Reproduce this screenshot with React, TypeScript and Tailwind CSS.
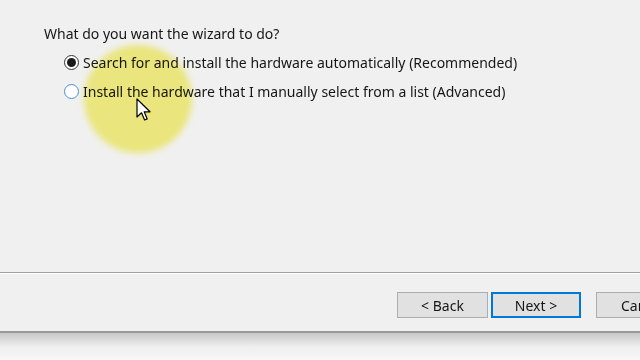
import React from 'react';

const font = { fontFamily: '"Noto Sans", "Open Sans", sans-serif' };

const Radio: React.FC<{ checked?: boolean }> = ({ checked }) => (
    <span
        className={
            checked
                ? 'flex h-[15px] w-[15px] shrink-0 items-center justify-center rounded-full border border-[#333] bg-white'
                : 'flex h-[15px] w-[15px] shrink-0 items-center justify-center rounded-full border border-[#4a90d0] bg-white'
        }
    >
        {checked && <span className="h-[9px] w-[9px] rounded-full bg-[#1a1a1a]" />}
    </span>
);

export default function App() {
    return (
        <div className="relative flex h-[360px] w-[640px] flex-col overflow-hidden bg-[#f0f0f0] text-[#161616]" style={font}>
            {/* question + options */}
            <div className="flex h-[272px] flex-col pl-[44px] pt-[24px]">
                <div className="text-[14px] leading-[20px]">What do you want the wizard to do?</div>
                <div className="mt-[8px] flex flex-col gap-[9px] pl-[20px]">
                    <label className="flex h-[20px] items-center gap-[4px] text-[14px]">
                        <Radio checked />
                        <span>Search for and install the hardware automatically (Recommended)</span>
                    </label>
                    <label className="flex h-[20px] items-center gap-[4px] text-[14px]">
                        <Radio />
                        <span>Install the hardware that I manually select from a list (Advanced)</span>
                    </label>
                </div>
            </div>

            {/* divider */}
            <div className="h-px bg-[#a0a0a0]" />
            <div className="h-px bg-white" />

            {/* button bar */}
            <div className="flex h-[57px] items-start pl-[397px] pt-[18px] text-[14px]">
                <button className="h-[26px] w-[91px] shrink-0 border border-[#adadad] bg-[#e1e1e1]">&lt; Back</button>
                <button className="ml-[3px] h-[26px] w-[90px] shrink-0 border-2 border-[#0078d7] bg-[#e1e1e1]">Next &gt;</button>
                <button className="ml-[15px] h-[26px] w-[90px] shrink-0 border border-[#adadad] bg-[#e1e1e1] text-left pl-[24px]">Cancel</button>
            </div>

            {/* bottom edge */}
            <div className="h-[2px] bg-[#9a9a9a]" />
            <div className="flex-1 bg-gradient-to-b from-[#c8c8c8] via-[#eeeeee] to-[#f8f8f8]" />

            {/* cursor highlight */}
            <div className="pointer-events-none absolute left-[84px] top-[45px] h-[108px] w-[108px] rounded-full bg-[#f6f050] opacity-70 mix-blend-multiply blur-[3px]" />
            <svg className="pointer-events-none absolute left-[136px] top-[98px]" width="16" height="25" viewBox="0 0 16 25">
                <path d="M1 1 L1 19 L5.5 14.8 L8.6 22 L11.2 20.9 L8.2 13.8 L14 13.8 Z" fill="#fff" stroke="#000" strokeWidth="1.2" strokeLinejoin="round" />
            </svg>
        </div>
    );
}
